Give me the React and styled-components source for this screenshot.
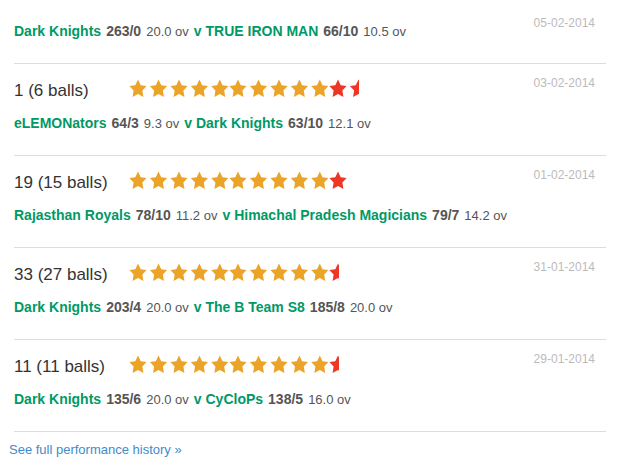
import React from "react";
import styled, { createGlobalStyle } from "styled-components";

const GlobalStyle = createGlobalStyle`
  * { box-sizing: border-box; }
  body {
    margin: 0;
    background: #fff;
    color: #555;
    font-family: "Liberation Sans", Arial, sans-serif;
    font-size: 14px;
    line-height: 20px;
  }
`;

const Page = styled.main`
  padding: 0 11px 0 9px;
`;

const List = styled.ul`
  list-style: none;
  margin: 0 0 0 5px;
  padding: 0;
`;

const Entry = styled.li`
  display: flex;
  justify-content: space-between;
  align-items: flex-start;
  padding: ${(p) => (p.$short ? "13px" : "9px")} 11px 22px 0;
  border-bottom: 1px solid #ddd;
`;

const Details = styled.div`
  padding-top: ${(p) => (p.$short ? "8px" : "6px")};
`;

const Performance = styled.div`
  display: flex;
  align-items: flex-start;
  height: 24px;
  margin-bottom: 10px;
`;

const Runs = styled.span`
  width: 115px;
  color: #333;
  font-size: 17px;
  line-height: 24px;
  white-space: nowrap;
`;

const Stars = styled.span`
  display: flex;
`;

const Strip = styled.span`
  display: block;
  width: ${(p) => p.$count * 20}px;
  height: 19px;
  overflow: hidden;
  color: ${(p) => (p.$bonus ? "#ee3626" : "#eba428")};
`;

const StripArt = styled.svg`
  display: block;
  width: 100px;
  height: 19px;
`;

const Result = styled.p`
  display: flex;
  align-items: baseline;
  gap: 5px;
  height: 20px;
  margin: 0;
  font-weight: bold;
  white-space: nowrap;
`;

const Team = styled.a`
  color: #009966;
  text-decoration: none;
`;

const Score = styled.span``;

const Overs = styled.span`
  font-size: 13px;
  font-weight: normal;
`;

const Day = styled.time`
  color: #bbb;
  font-size: 12px;
`;

const Footer = styled.footer`
  padding-top: 7px;
`;

const HistoryLink = styled.a`
  color: #428bca;
  font-size: 13px;
  text-decoration: none;
`;

const matches = [
  { date: "05-02-2014", home: ["Dark Knights", "263/0", "20.0"], away: ["TRUE IRON MAN", "66/10", "10.5"] },
  { date: "03-02-2014", runs: "1 (6 balls)", rating: 11.5, home: ["eLEMONators", "64/3", "9.3"], away: ["Dark Knights", "63/10", "12.1"] },
  { date: "01-02-2014", runs: "19 (15 balls)", rating: 11, home: ["Rajasthan Royals", "78/10", "11.2"], away: ["Himachal Pradesh Magicians", "79/7", "14.2"] },
  { date: "31-01-2014", runs: "33 (27 balls)", rating: 10.5, home: ["Dark Knights", "203/4", "20.0"], away: ["The B Team S8", "185/8", "20.0"] },
  { date: "29-01-2014", runs: "11 (11 balls)", rating: 10.5, home: ["Dark Knights", "135/6", "20.0"], away: ["CyCloPs", "138/5", "16.0"] },
];

const starCenters = [9, 29.5, 50, 70.4, 90.8];

function StarStrip({ count, bonus }) {
  return (
    <Strip $count={count} $bonus={bonus}>
      <StripArt viewBox="0 0 100 19" aria-hidden="true">
        {starCenters.map((x) => (
          <path
            key={x}
            transform={`translate(${x} 0)`}
            fill="currentColor"
            d="M0 .4 2.7 6.2 8.6 7.1 4.4 11.5 5.4 18 0 15.1-5.4 18-4.4 11.5-8.6 7.1-2.7 6.2Z"
          />
        ))}
      </StripArt>
    </Strip>
  );
}

function Rating({ value }) {
  return (
    <Stars role="img" aria-label={`${value} stars`}>
      <StarStrip count={5} />
      <StarStrip count={5} />
      <StarStrip count={value - 10} bonus />
    </Stars>
  );
}

function Side({ name, score, overs }) {
  return (
    <>
      <Team href="#">{name}</Team>
      <Score>{score}</Score>
      <Overs>{overs} ov</Overs>
    </>
  );
}

function Match({ date, runs, rating, home, away }) {
  return (
    <Entry $short={!runs}>
      <Details $short={!runs}>
        {runs && (
          <Performance>
            <Runs>{runs}</Runs>
            <Rating value={rating} />
          </Performance>
        )}
        <Result>
          <Side name={home[0]} score={home[1]} overs={home[2]} />
          <Side name={`v ${away[0]}`} score={away[1]} overs={away[2]} />
        </Result>
      </Details>
      <Day>{date}</Day>
    </Entry>
  );
}

export default function App() {
  return (
    <Page>
      <GlobalStyle />
      <List>
        {matches.map((match) => (
          <Match key={match.date} {...match} />
        ))}
      </List>
      <Footer>
        <HistoryLink href="#">See full performance history »</HistoryLink>
      </Footer>
    </Page>
  );
}
